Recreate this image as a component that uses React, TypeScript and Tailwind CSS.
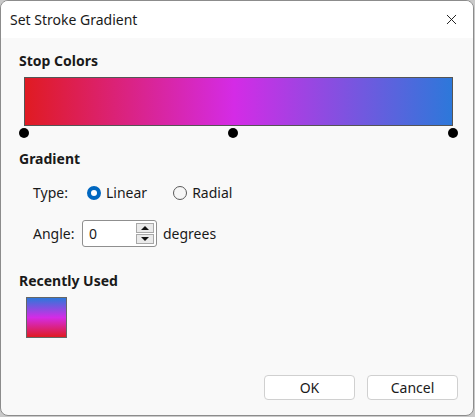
import { X } from 'lucide-react'

const font = { fontFamily: '"Noto Sans", "Open Sans", sans-serif' }

function Radio({ checked, label }: { checked: boolean; label: string }) {
  return (
    <label className="flex items-center gap-[5px]">
      {checked ? (
        <span className="h-[14px] w-[14px] rounded-full border-[4px] border-[#0067c0] bg-white" />
      ) : (
        <span className="h-[14px] w-[14px] rounded-full border border-[#5a5a5a] bg-[#f6f6f6]" />
      )}
      <span>{label}</span>
    </label>
  )
}

function SpinBox() {
  return (
    <div className="flex h-[27px] w-[75px] items-center rounded-[3px] border border-[#8f8f8f] bg-white pl-[6px] pr-[2px]">
      <span className="flex-1">0</span>
      <div className="flex flex-col gap-px">
        <div className="flex h-[10px] w-[18px] items-center justify-center border border-[#a8a8a8] bg-[#eaeaea]">
          <svg width="8" height="4" viewBox="0 0 8 4"><path d="M0 4 L4 0 L8 4 Z" fill="#111" /></svg>
        </div>
        <div className="flex h-[10px] w-[18px] items-center justify-center border border-[#a8a8a8] bg-[#eaeaea]">
          <svg width="8" height="4" viewBox="0 0 8 4"><path d="M0 0 L4 4 L8 0 Z" fill="#111" /></svg>
        </div>
      </div>
    </div>
  )
}

// stop markers sit under the bar at their gradient offsets
const stops = [0, 48.8, 100]

export default function App() {
  return (
    <div className="h-[417px] w-[475px] bg-[#c9c9c9]" style={font}>
      <div className="flex h-[416px] w-[474px] flex-col overflow-hidden rounded-[8px] border border-[#8c8c8c] bg-[#f9f9f9] text-[14px] text-[#1a1a1a]">
        <div className="flex h-[37px] shrink-0 items-center justify-between bg-white pl-[9px] pr-[13px]">
          <span className="text-[14px]">Set Stroke Gradient</span>
          <X size={17} strokeWidth={1.3} className="text-[#111]" />
        </div>

        <div className="flex flex-1 flex-col pl-[18px] pr-[15px]">
          <div className="mt-[13px] text-[14px] font-bold leading-[20px]">Stop Colors</div>
          <div className="relative ml-[5px] mr-[5px] mt-[6px] h-[61px]">
            <div className="h-[49px] border border-[#555] bg-[linear-gradient(to_right,#e01b22_0%,#d42be6_49%,#2d78da_100%)]" />
            {stops.map((s) => (
              <span
                key={s}
                className="absolute top-[51px] h-[10px] w-[10px] -translate-x-1/2 rounded-full bg-black"
                style={{ left: `${s}%` }}
              />
            ))}
          </div>

          <div className="mt-[11px] font-bold leading-[20px]">Gradient</div>
          <div className="ml-[14px] mt-[14px] flex items-center leading-[20px]">
            <span className="w-[54px]">Type:</span>
            <Radio checked label="Linear" />
            <span className="w-[26px]" />
            <Radio checked={false} label="Radial" />
          </div>
          <div className="ml-[14px] mt-[17px] flex items-center gap-[4px] leading-[20px]">
            <span className="w-[45px]">Angle:</span>
            <SpinBox />
            <span className="ml-[2px]">degrees</span>
          </div>

          <div className="mt-[24px] font-bold leading-[20px]">Recently Used</div>
          <div className="ml-[7px] mt-[6px] h-[41px] w-[41px] border-[1.5px] border-[#666] bg-[linear-gradient(to_bottom,#2d78da_0%,#d42be6_50%,#e01b22_100%)]" />

          <div className="mt-auto mb-[15px] flex justify-end gap-[12px]">
            <button className="h-[25px] w-[91px] rounded-[4px] border border-[#d0d0d0] bg-white">OK</button>
            <button className="h-[25px] w-[91px] rounded-[4px] border border-[#d0d0d0] bg-white">Cancel</button>
          </div>
        </div>
      </div>
    </div>
  )
}
